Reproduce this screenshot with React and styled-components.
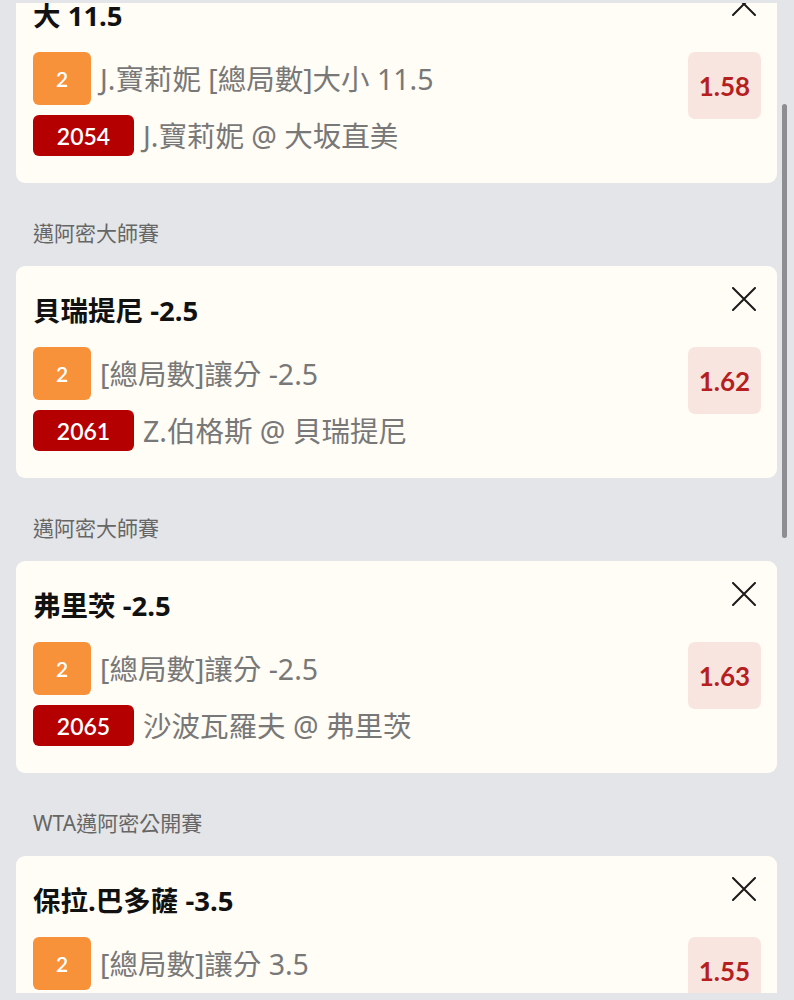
import React from 'react';
import styled, { createGlobalStyle } from 'styled-components';

const GlobalStyle = createGlobalStyle`
  html, body {
    margin: 0;
    padding: 0;
    background: #e4e5e8;
  }
  body {
    font-family: Lato, "Noto Sans CJK TC", sans-serif;
  }
`;

const textFont = `"Noto Sans", "Noto Sans CJK TC", sans-serif`;

const Page = styled.div`
  width: 794px;
  height: 1000px;
  padding: 3px 0 7px;
  box-sizing: border-box;
  background: #e4e5e8;
`;

const Viewport = styled.div`
  position: relative;
  height: 990px;
  overflow: hidden;
`;

const List = styled.div`
  display: flex;
  flex-direction: column;
  margin-top: -32px;
  padding: 0 17px 0 16px;
`;

const ScrollThumb = styled.div`
  position: absolute;
  top: 101px;
  right: 7px;
  width: 5px;
  height: 434px;
  border-radius: 3px;
  background: #8e8e92;
`;

const GroupLabel = styled.div`
  padding: 36px 0 19px 17px;
  font-family: ${textFont};
  font-size: 21px;
  line-height: 28px;
  color: #666;
`;

const Card = styled.div`
  height: 212px;
  box-sizing: border-box;
  padding: 29px 16px 0 17px;
  background: #fffdf6;
  border-radius: 9px;
`;

const Header = styled.div`
  display: flex;
  justify-content: space-between;
  align-items: flex-start;
`;

const Title = styled.div`
  font-family: ${textFont};
  font-size: 27.5px;
  line-height: 32px;
  font-weight: 700;
  color: #111;
  white-space: nowrap;
`;

const CloseButton = styled.div`
  width: 24px;
  height: 24px;
  margin: -8px 5px 0 0;
  color: #1a1a1a;
`;

const Body = styled.div`
  display: flex;
  justify-content: space-between;
  align-items: flex-start;
  margin-top: 20px;
`;

const Lines = styled.div`
  display: flex;
  flex-direction: column;
  gap: 10px;
`;

const Line = styled.div`
  display: flex;
  align-items: center;
  gap: 9px;
  height: ${p => (p.$code ? '41px' : '53px')};
`;

const Badge = styled.div`
  display: flex;
  align-items: center;
  justify-content: center;
  flex-shrink: 0;
  width: ${p => (p.$code ? '101px' : '58px')};
  height: ${p => (p.$code ? '41px' : '53px')};
  border-radius: 6px;
  background: ${p => (p.$code ? '#b40000' : '#f7913a')};
  color: #fff;
  font-size: ${p => (p.$code ? '23px' : '21px')};
  font-weight: 600;
`;

const LineText = styled.div`
  font-family: ${textFont};
  font-size: 28.5px;
  line-height: 36px;
  font-weight: 400;
  color: #787878;
  white-space: nowrap;
`;

const Odds = styled.div`
  display: flex;
  align-items: center;
  justify-content: center;
  flex-shrink: 0;
  width: 73px;
  height: 67px;
  border-radius: 7px;
  background: #f8e5df;
  color: #b51f1f;
  font-size: 26px;
  font-weight: 700;
`;

const CloseIcon = () => (
  <svg width="24" height="24" viewBox="0 0 24 24" fill="none">
    <path d="M1 1L23 23M23 1L1 23" stroke="currentColor" strokeWidth="2" strokeLinecap="round" />
  </svg>
);

const bets = [
  {
    league: null,
    title: '大 11.5',
    market: 'J.寶莉妮 [總局數]大小 11.5',
    code: '2054',
    match: 'J.寶莉妮 @ 大坂直美',
    odds: '1.58',
  },
  {
    league: '邁阿密大師賽',
    title: '貝瑞提尼 -2.5',
    market: '[總局數]讓分 -2.5',
    code: '2061',
    match: 'Z.伯格斯 @ 貝瑞提尼',
    odds: '1.62',
  },
  {
    league: '邁阿密大師賽',
    title: '弗里茨 -2.5',
    market: '[總局數]讓分 -2.5',
    code: '2065',
    match: '沙波瓦羅夫 @ 弗里茨',
    odds: '1.63',
  },
  {
    league: 'WTA邁阿密公開賽',
    title: '保拉.巴多薩 -3.5',
    market: '[總局數]讓分 3.5',
    code: '2071',
    match: '薩巴倫卡 @ 保拉.巴多薩',
    odds: '1.55',
  },
];

function BetCard({ bet }) {
  return (
    <Card>
      <Header>
        <Title>{bet.title}</Title>
        <CloseButton>
          <CloseIcon />
        </CloseButton>
      </Header>
      <Body>
        <Lines>
          <Line>
            <Badge>2</Badge>
            <LineText>{bet.market}</LineText>
          </Line>
          <Line $code>
            <Badge $code>{bet.code}</Badge>
            <LineText>{bet.match}</LineText>
          </Line>
        </Lines>
        <Odds>{bet.odds}</Odds>
      </Body>
    </Card>
  );
}

export default function App() {
  return (
    <Page>
      <GlobalStyle />
      <Viewport>
        <List>
          {bets.map((bet, i) => (
            <React.Fragment key={i}>
              {bet.league && <GroupLabel>{bet.league}</GroupLabel>}
              <BetCard bet={bet} />
            </React.Fragment>
          ))}
        </List>
        <ScrollThumb />
      </Viewport>
    </Page>
  );
}
